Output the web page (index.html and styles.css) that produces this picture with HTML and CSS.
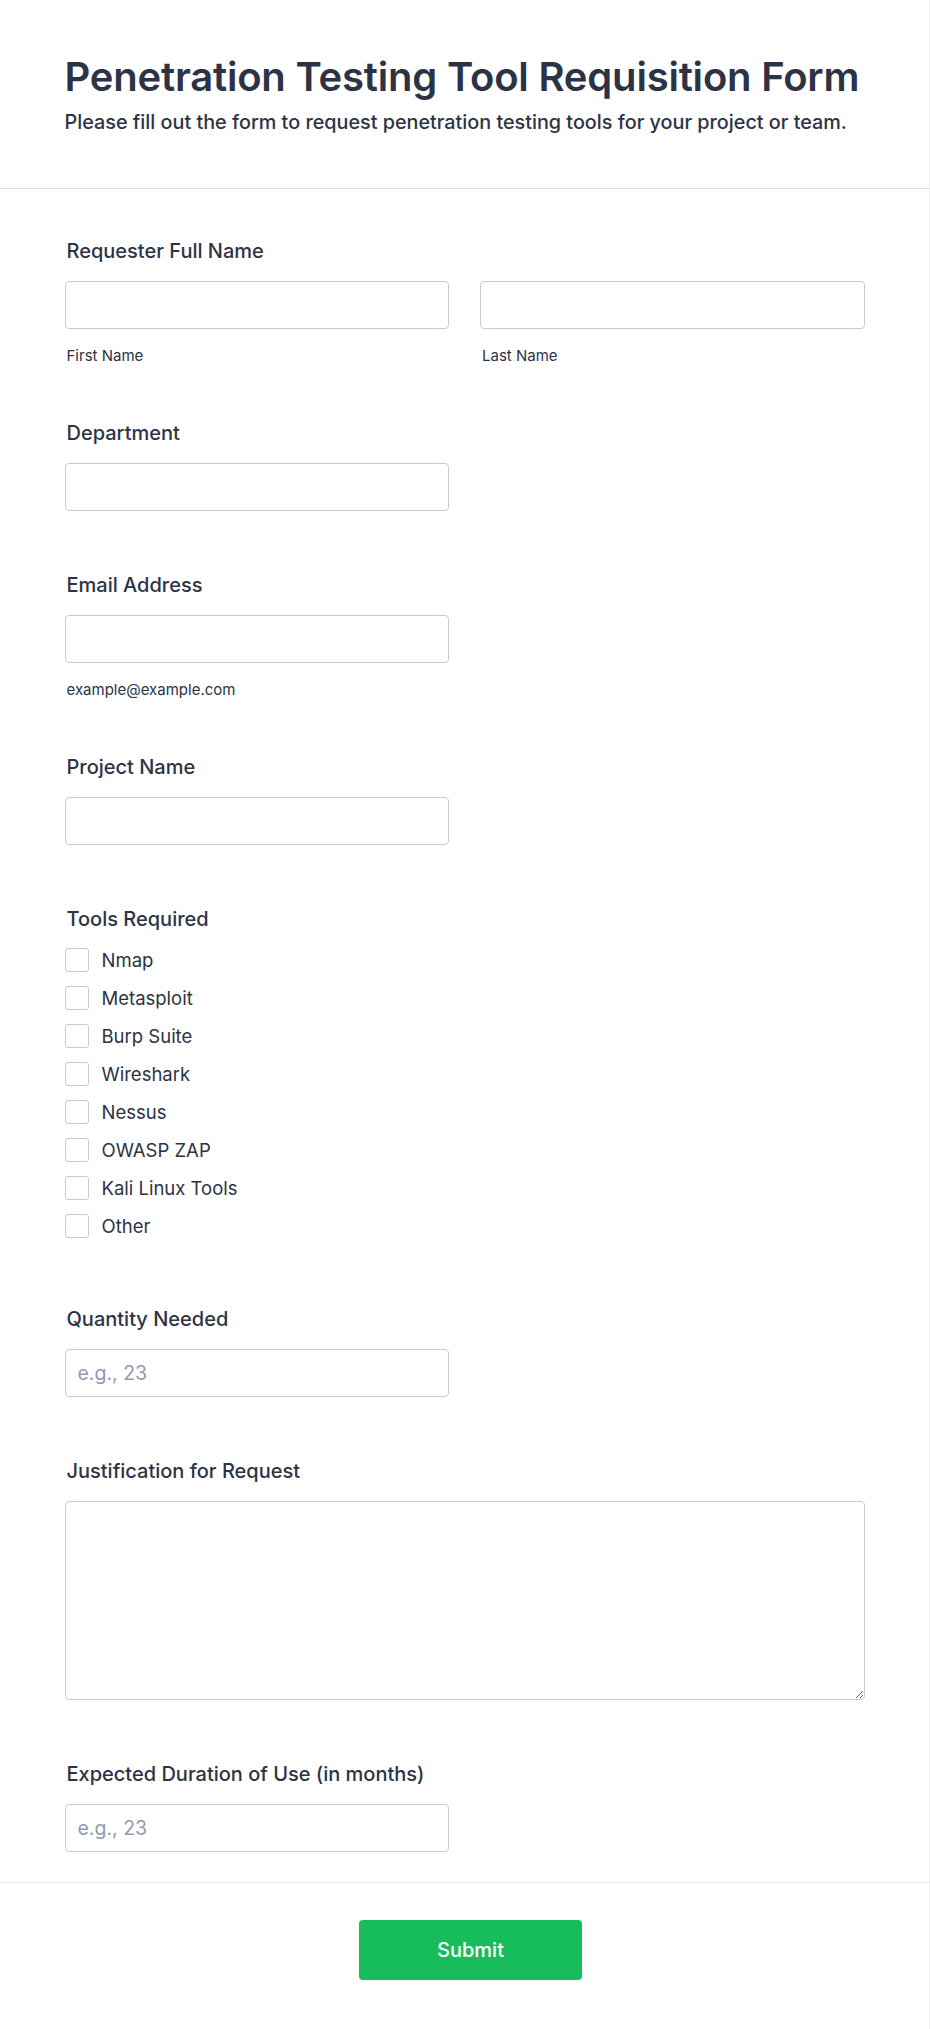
FILE: index.html
```html
<!DOCTYPE html>
<html lang="en">
<head>
<meta charset="utf-8">
<title>Penetration Testing Tool Requisition Form</title>
<link rel="stylesheet" href="styles.css">
</head>
<body>
<div class="page">
  <header class="form-header">
    <div class="container">
      <h1 class="form-title">Penetration Testing Tool Requisition Form</h1>
      <p class="form-subtitle">Please fill out the form to request penetration testing tools for your project or team.</p>
    </div>
  </header>

  <form class="form-body">
    <div class="container">
      <div class="field">
        <label class="field-label">Requester Full Name</label>
        <div class="name-grid">
          <div class="sub-field">
            <input type="text" class="text-input">
            <span class="sub-label">First Name</span>
          </div>
          <div class="sub-field">
            <input type="text" class="text-input">
            <span class="sub-label">Last Name</span>
          </div>
        </div>
      </div>

      <div class="field">
        <label class="field-label">Department</label>
        <input type="text" class="text-input half">
      </div>

      <div class="field">
        <label class="field-label">Email Address</label>
        <div class="sub-field half">
          <input type="email" class="text-input">
          <span class="sub-label">example@example.com</span>
        </div>
      </div>

      <div class="field">
        <label class="field-label">Project Name</label>
        <input type="text" class="text-input half">
      </div>

      <div class="field">
        <label class="field-label">Tools Required</label>
        <div class="options">
          <label class="option"><span class="checkbox"></span><span class="option-text">Nmap</span></label>
          <label class="option"><span class="checkbox"></span><span class="option-text">Metasploit</span></label>
          <label class="option"><span class="checkbox"></span><span class="option-text">Burp Suite</span></label>
          <label class="option"><span class="checkbox"></span><span class="option-text">Wireshark</span></label>
          <label class="option"><span class="checkbox"></span><span class="option-text">Nessus</span></label>
          <label class="option"><span class="checkbox"></span><span class="option-text">OWASP ZAP</span></label>
          <label class="option"><span class="checkbox"></span><span class="option-text">Kali Linux Tools</span></label>
          <label class="option"><span class="checkbox"></span><span class="option-text">Other</span></label>
        </div>
      </div>

      <div class="field">
        <label class="field-label">Quantity Needed</label>
        <input type="text" class="text-input half" placeholder="e.g., 23">
      </div>

      <div class="field">
        <label class="field-label">Justification for Request</label>
        <textarea class="text-area"></textarea>
      </div>

      <div class="field">
        <label class="field-label">Expected Duration of Use (in months)</label>
        <input type="text" class="text-input half" placeholder="e.g., 23">
      </div>
    </div>
  </form>

  <footer class="form-footer">
    <button type="button" class="submit-btn">Submit</button>
  </footer>
</div>
</body>
</html>
```

FILE: styles.css
```css
* {
  box-sizing: border-box;
}

html, body {
  margin: 0;
  padding: 0;
  background: #ffffff;
}

body {
  font-family: Inter, "Noto Sans", "Liberation Sans", sans-serif;
  color: #2c3345;
}

.page {
  width: 930px;
  min-height: 2029px;
  border-right: 1px solid #ececf2;
  background: #ffffff;
}

.container {
  width: 800px;
  margin: 0 auto;
}

.form-header {
  padding: 53px 0 52px;
  border-bottom: 1px solid #dcdde8;
}

.form-title {
  margin: 0;
  font-size: 40px;
  line-height: 48px;
  font-weight: 600;
  color: #2c3345;
  letter-spacing: -0.2px;
}

.form-subtitle {
  margin: 7px 0 0;
  font-size: 19.8px;
  line-height: 28px;
  font-weight: 500;
  color: #2c3345;
}

.form-body {
  padding: 18px 0 0;
  border-bottom: 1px solid #e6e8ee;
}

.field {
  padding: 30px 0;
  display: flex;
  flex-direction: column;
  align-items: flex-start;
}

.field-label {
  display: block;
  padding-left: 2px;
  font-size: 20px;
  line-height: 28px;
  font-weight: 500;
  color: #2c3345;
  margin-bottom: 16px;
}

.name-grid {
  display: grid;
  grid-template-columns: 1fr 1fr;
  column-gap: 31px;
  width: 100%;
}

.sub-field {
  display: flex;
  flex-direction: column;
}

.half {
  width: 384px;
}

.text-input {
  display: block;
  width: 100%;
  height: 48px;
  padding: 0 12px;
  border: 1px solid #c3cad8;
  border-radius: 4px;
  background: #ffffff;
  font-family: Inter, "Noto Sans", "Liberation Sans", sans-serif;
  font-size: 19.5px;
  color: #2c3345;
  outline: none;
}

.text-input.half {
  width: 384px;
}

.text-input::placeholder {
  color: #8f9bb3;
  opacity: 1;
}

.sub-label {
  display: block;
  margin: 18px 0 -6px;
  padding-left: 2px;
  font-size: 15px;
  line-height: 18px;
  color: #2c3345;
}

.options {
  display: flex;
  flex-direction: column;
  margin-top: -8px;
}

.option {
  display: flex;
  align-items: center;
  height: 38px;
}

.checkbox {
  width: 24px;
  height: 24px;
  border: 1px solid #c3cad8;
  border-radius: 3px;
  background: #ffffff;
  flex: none;
}

.option-text {
  margin-left: 13px;
  font-size: 18.5px;
  line-height: 24px;
  color: #2c3345;
}

.text-area {
  display: block;
  width: 100%;
  height: 199px;
  border: 1px solid #c3cad8;
  border-radius: 4px;
  padding: 10px 12px;
  font-family: Inter, "Noto Sans", "Liberation Sans", sans-serif;
  font-size: 18px;
  outline: none;
}

.form-footer {
  display: flex;
  justify-content: center;
  padding: 37px 0 49px 12px;
}

.submit-btn {
  width: 223px;
  height: 60px;
  border: none;
  border-radius: 4px;
  background: #18bd5b;
  color: #ffffff;
  font-family: Inter, "Noto Sans", "Liberation Sans", sans-serif;
  font-size: 20px;
  font-weight: 500;
  cursor: pointer;
}
```
